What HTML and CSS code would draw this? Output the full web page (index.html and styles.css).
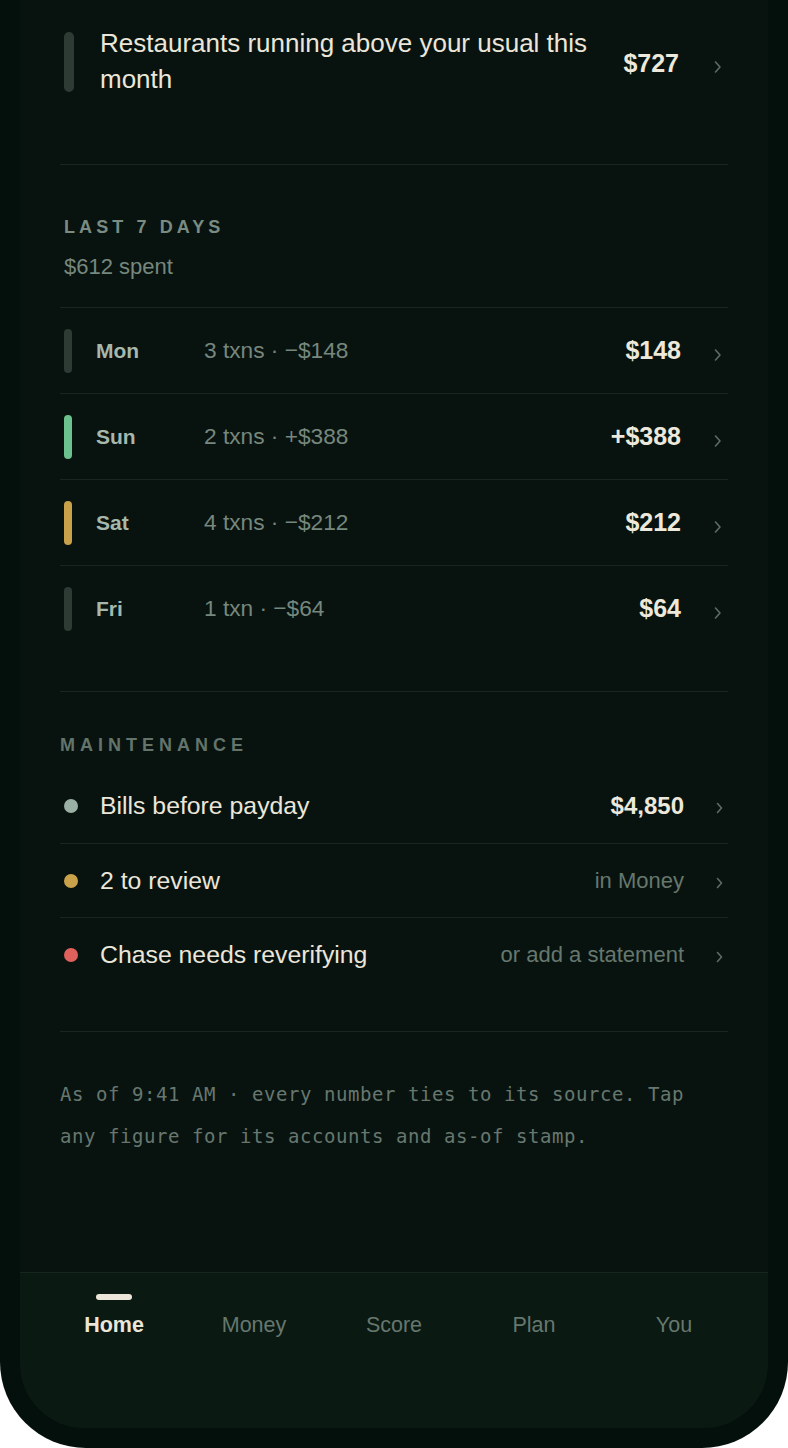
FILE: index.html
```html
<!DOCTYPE html>
<html lang="en">
<head>
<meta charset="utf-8">
<title>Home</title>
<link rel="stylesheet" href="styles.css">
</head>
<body>
<div class="device">
  <div class="screen">
    <main class="content">
      <section class="section insight-section">
        <div class="insight">
          <span class="insight-bar"></span>
          <p class="insight-text">Restaurants running above your usual this month</p>
          <span class="insight-amount">$727</span>
          <svg class="chev" width="8" height="14" viewBox="0 0 8 14"><polyline points="1.5,2 6,7 1.5,12" /></svg>
        </div>
      </section>

      <section class="section days-section">
        <div class="days-head">
          <h2 class="eyebrow eyebrow-days">LAST 7 DAYS</h2>
          <p class="days-sub">$612 spent</p>
        </div>
        <ul class="days">
          <li class="day">
            <span class="day-bar bar-neutral"></span>
            <span class="day-name">Mon</span>
            <span class="day-meta">3 txns · −$148</span>
            <span class="day-amount">$148</span>
            <svg class="chev" width="8" height="14" viewBox="0 0 8 14"><polyline points="1.5,2 6,7 1.5,12" /></svg>
          </li>
          <li class="day">
            <span class="day-bar bar-green"></span>
            <span class="day-name">Sun</span>
            <span class="day-meta">2 txns · +$388</span>
            <span class="day-amount">+$388</span>
            <svg class="chev" width="8" height="14" viewBox="0 0 8 14"><polyline points="1.5,2 6,7 1.5,12" /></svg>
          </li>
          <li class="day">
            <span class="day-bar bar-gold"></span>
            <span class="day-name">Sat</span>
            <span class="day-meta">4 txns · −$212</span>
            <span class="day-amount">$212</span>
            <svg class="chev" width="8" height="14" viewBox="0 0 8 14"><polyline points="1.5,2 6,7 1.5,12" /></svg>
          </li>
          <li class="day">
            <span class="day-bar bar-neutral"></span>
            <span class="day-name">Fri</span>
            <span class="day-meta">1 txn · −$64</span>
            <span class="day-amount">$64</span>
            <svg class="chev" width="8" height="14" viewBox="0 0 8 14"><polyline points="1.5,2 6,7 1.5,12" /></svg>
          </li>
        </ul>
      </section>

      <section class="section maint-section">
        <h2 class="eyebrow eyebrow-maint">MAINTENANCE</h2>
        <ul class="maint">
          <li class="maint-row">
            <span class="dot dot-sage"></span>
            <span class="maint-label">Bills before payday</span>
            <span class="maint-amount">$4,850</span>
            <svg class="chev chev-sm" width="7" height="12" viewBox="0 0 7 12"><polyline points="1.5,1.5 5.5,6 1.5,10.5" /></svg>
          </li>
          <li class="maint-row">
            <span class="dot dot-gold"></span>
            <span class="maint-label">2 to review</span>
            <span class="maint-note">in Money</span>
            <svg class="chev chev-sm" width="7" height="12" viewBox="0 0 7 12"><polyline points="1.5,1.5 5.5,6 1.5,10.5" /></svg>
          </li>
          <li class="maint-row">
            <span class="dot dot-red"></span>
            <span class="maint-label">Chase needs reverifying</span>
            <span class="maint-note">or add a statement</span>
            <svg class="chev chev-sm" width="7" height="12" viewBox="0 0 7 12"><polyline points="1.5,1.5 5.5,6 1.5,10.5" /></svg>
          </li>
        </ul>
      </section>

      <p class="footnote">As of 9:41 AM · every number ties to its source. Tap any figure for its accounts and as-of stamp.</p>
    </main>

    <nav class="tabbar">
      <a class="tab tab-active"><span class="tab-ind"></span><span class="tab-label">Home</span></a>
      <a class="tab"><span class="tab-ind"></span><span class="tab-label">Money</span></a>
      <a class="tab"><span class="tab-ind"></span><span class="tab-label">Score</span></a>
      <a class="tab"><span class="tab-ind"></span><span class="tab-label">Plan</span></a>
      <a class="tab"><span class="tab-ind"></span><span class="tab-label">You</span></a>
    </nav>
  </div>
</div>
</body>
</html>
```

FILE: styles.css
```css
* { box-sizing: border-box; }

html, body {
  margin: 0;
  padding: 0;
  background: #ffffff;
}

body {
  font-family: "Liberation Sans", Arial, sans-serif;
  color: #ebe6d9;
}

.device {
  width: 788px;
  height: 1448px;
  background: #04100b;
  padding: 0 20px 20px;
  border-radius: 0 0 86px 86px;
}

.screen {
  height: 1428px;
  background: #08130f;
  border-radius: 0 0 64px 64px;
  display: flex;
  flex-direction: column;
  overflow: hidden;
}

.content {
  flex: 1;
  padding: 0 40px;
}

.section {
  border-bottom: 1px solid #19251f;
}

/* Insight row */
.insight-section {
  padding: 25px 0 67px;
}

.insight {
  display: flex;
  align-items: center;
  padding: 0 6px 0 4px;
}

.insight-bar {
  flex: none;
  width: 10px;
  height: 60px;
  margin-top: 2px;
  border-radius: 5px;
  background: #2e3b35;
}

.insight-text {
  flex: 1;
  margin: 0 0 0 26px;
  font-size: 26px;
  line-height: 36px;
  color: #ebe6d9;
}

.insight-amount {
  flex: none;
  margin-left: 24px;
  margin-top: 4px;
  font-size: 25px;
  font-weight: bold;
  color: #ede8dc;
}

.chev {
  flex: none;
  display: block;
  fill: none;
  stroke: #5d6d65;
  stroke-width: 1.6;
  stroke-linecap: round;
  stroke-linejoin: round;
}

.insight .chev {
  margin-left: 35px;
  margin-top: 12px;
}

/* Last 7 days */
.days-section {
  padding: 50px 0 40px;
}

.days-head {
  padding-left: 4px;
  margin-bottom: 26px;
}

.eyebrow {
  margin: 0;
  font-size: 18px;
  line-height: 24px;
  font-weight: bold;
}

.eyebrow-days {
  letter-spacing: 4.1px;
  color: #7a8b82;
}

.days-sub {
  margin: 14px 0 0;
  font-size: 22px;
  line-height: 28px;
  color: #76877e;
}

.days {
  list-style: none;
  margin: 0;
  padding: 0;
}

.day {
  display: flex;
  align-items: center;
  height: 86px;
  border-top: 1px solid #19251f;
  padding: 0 6px 0 4px;
}

.day-bar {
  flex: none;
  width: 8px;
  height: 44px;
  border-radius: 4px;
}

.bar-neutral { background: #2e3b35; }
.bar-green { background: #6cc28f; }
.bar-gold { background: #c9a14b; }

.day-name {
  flex: none;
  width: 108px;
  margin-left: 24px;
  font-size: 21px;
  font-weight: bold;
  color: #a6b7ac;
}

.day-meta {
  flex: 1;
  font-size: 22.7px;
  color: #76877e;
}

.day-amount {
  flex: none;
  font-size: 25px;
  font-weight: bold;
  color: #ede8dc;
}

.day .chev {
  margin-left: 33px;
  margin-top: 9px;
}

/* Maintenance */
.maint-section {
  padding: 41px 0 40px;
}

.eyebrow-maint {
  letter-spacing: 5px;
  color: #63746b;
}

.maint {
  list-style: none;
  margin: 12px 0 0;
  padding: 0;
}

.maint-row {
  display: flex;
  align-items: center;
  height: 74px;
  padding: 0 5px 0 4px;
}

.maint-row + .maint-row {
  border-top: 1px solid #19251f;
}

.dot {
  flex: none;
  width: 14px;
  height: 14px;
  border-radius: 50%;
}

.dot-sage { background: #9ab0a4; }
.dot-gold { background: #c9a24a; }
.dot-red { background: #e0615b; }

.maint-label {
  flex: 1;
  margin-left: 22px;
  font-size: 24.8px;
  color: #ebe6d9;
}

.maint-amount {
  flex: none;
  font-size: 24px;
  font-weight: bold;
  color: #ede8dc;
}

.maint-note {
  flex: none;
  font-size: 22px;
  color: #66776e;
}

.maint-row .chev {
  margin-left: 32px;
  margin-top: 4px;
}

/* Footnote */
.footnote {
  margin: 0;
  padding-top: 41px;
  font-family: "DejaVu Sans Mono", "Liberation Mono", monospace;
  font-size: 19px;
  letter-spacing: 0.56px;
  line-height: 42px;
  color: #67776f;
}

/* Tab bar */
.tabbar {
  flex: none;
  height: 156px;
  background: #0a1912;
  border-top: 1px solid #15261c;
  display: flex;
  padding: 21px 24px 0;
}

.tab {
  flex: 1;
  display: flex;
  flex-direction: column;
  align-items: center;
}

.tab-ind {
  width: 36px;
  height: 6px;
  border-radius: 3px;
  background: transparent;
}

.tab-active .tab-ind {
  background: #ebe6d9;
}

.tab-label {
  margin-top: 12px;
  font-size: 21.5px;
  line-height: 26px;
  color: #66776e;
}

.tab-active .tab-label {
  font-weight: bold;
  color: #ebe6d9;
}
```
